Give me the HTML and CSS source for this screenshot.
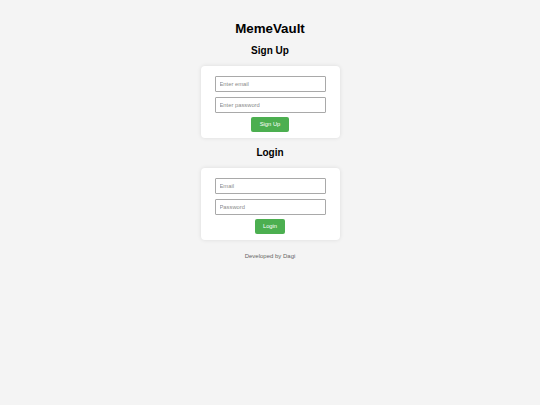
FILE: index.html
```html
<!DOCTYPE html>
<html lang="en">
<head>
<meta charset="utf-8">
<title>MemeVault</title>
<link rel="stylesheet" href="styles.css">
</head>
<body>
  <h1 class="title">MemeVault</h1>
  <h2 class="section-title">Sign Up</h2>
  <form class="card">
    <input class="field" type="email" placeholder="Enter email">
    <input class="field" type="password" placeholder="Enter password">
    <button class="btn" type="button">Sign Up</button>
  </form>
  <h2 class="section-title">Login</h2>
  <form class="card">
    <input class="field" type="email" placeholder="Email">
    <input class="field" type="password" placeholder="Password">
    <button class="btn" type="button">Login</button>
  </form>
  <p class="footer">Developed by Dagi</p>
</body>
</html>
```

FILE: styles.css
```css
html, body {
  margin: 0;
  background: #f4f4f4;
}
body {
  padding-top: 20.7px;
  font-family: "Liberation Sans", Arial, sans-serif;
  text-align: center;
  color: #000;
}
.title {
  font-size: 13.33px;
  line-height: 16px;
  margin: 0 0 8px;
  font-weight: bold;
}
.section-title {
  font-size: 10px;
  line-height: 12px;
  margin: 0 0 9px;
  font-weight: bold;
}
.card {
  width: 139px;
  box-sizing: border-box;
  margin: 0 auto 9px;
  padding: 10px 14px 6px;
  background: #fff;
  border-radius: 4px;
  box-shadow: 0 0 4px rgba(0, 0, 0, 0.1);
  display: flex;
  flex-direction: column;
  align-items: stretch;
}
.field {
  display: block;
  box-sizing: border-box;
  width: 100%;
  height: 16px;
  margin: 0 0 5px;
  padding: 0 4px;
  border: 1px solid #a9a9a9;
  border-radius: 1px;
  font-family: "Liberation Sans", Arial, sans-serif;
  font-size: 5.8px;
  color: #000;
  background: #fff;
  outline: none;
}
.field::placeholder {
  color: #8a8a8a;
}
.btn {
  align-self: center;
  height: 15px;
  margin-top: -1px;
  padding: 0 8.3px;
  border: none;
  border-radius: 2px;
  background: #4caf50;
  color: #fff;
  font-family: "Liberation Sans", Arial, sans-serif;
  font-size: 5.8px;
  line-height: 15px;
  cursor: pointer;
}
.footer {
  margin: 12px 0 0;
  font-size: 6px;
  line-height: 8px;
  color: #666;
}
```
